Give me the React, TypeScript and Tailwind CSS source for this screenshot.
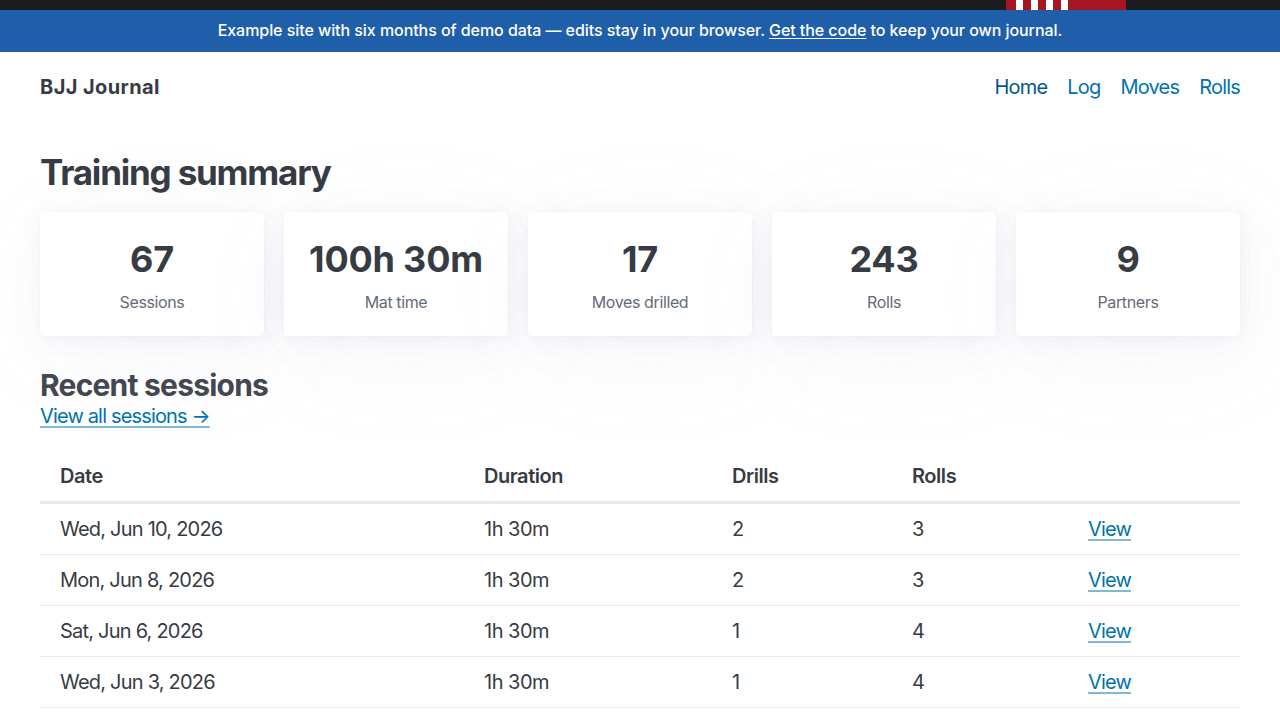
const links = ["Home", "Log", "Moves", "Rolls"];

const stats = [
  { value: "67", label: "Sessions" },
  { value: "100h 30m", label: "Mat time" },
  { value: "17", label: "Moves drilled" },
  { value: "243", label: "Rolls" },
  { value: "9", label: "Partners" },
];

const sessions = [
  { date: "Wed, Jun 10, 2026", duration: "1h 30m", drills: 2, rolls: 3 },
  { date: "Mon, Jun 8, 2026", duration: "1h 30m", drills: 2, rolls: 3 },
  { date: "Sat, Jun 6, 2026", duration: "1h 30m", drills: 1, rolls: 4 },
  { date: "Wed, Jun 3, 2026", duration: "1h 30m", drills: 1, rolls: 4 },
];

const linkClass =
  "tracking-[-0.84px] text-[#0172ad] underline decoration-[#0172ad]/50 decoration-2 underline-offset-[3px]";

const headClass = "border-b-[3px] border-[#e7eaf0] pl-5 font-semibold";
const cellClass = "border-b border-[#e7eaf0] pl-5";

const BeltBar = () => (
  <div className="flex h-[10px] justify-end bg-[#1c1b20] pr-[154px]">
    <div className="flex w-[120px] gap-2 bg-[#a51522] pl-[10px]">
      <div className="w-[7px] bg-white" />
      <div className="w-[7px] bg-white" />
      <div className="w-[7px] bg-white" />
      <div className="w-[7px] bg-white" />
    </div>
  </div>
);

const App = () => {
  return (
    <div className="h-screen overflow-hidden bg-white font-['Inter',sans-serif] text-xl text-[#373c44]">
      <BeltBar />
      <div className="h-[42px] bg-[#1f5faa] text-center text-base leading-[40px] font-medium tracking-[-0.06px] text-white">
        Example site with six months of demo data — edits stay in your browser.{" "}
        <a className="underline decoration-1 underline-offset-2">Get the code</a> to keep your own journal.
      </div>

      <div className="px-10">
        <header className="flex h-[70px] items-center justify-between">
          <strong className="font-bold tracking-[0.4px]">BJJ Journal</strong>
          <nav className="flex gap-5 tracking-[-0.8px]">
            {links.map((link) => (
              <a key={link} className={link === "Home" ? "text-[#015887]" : "text-[#0172ad]"}>
                {link}
              </a>
            ))}
          </nav>
        </header>

        <h1 className="mt-7 text-[35px] leading-[44px] font-bold tracking-[-1.2px]">Training summary</h1>
        <div className="mt-[18px] grid grid-cols-5 gap-5">
          {stats.map((stat) => (
            <div
              key={stat.label}
              className="h-[124px] rounded-[5px] bg-white pt-[25px] text-center shadow-[0.29px_0.58px_3.48px_rgba(129,145,181,0.017),0.67px_1.34px_8.04px_rgba(129,145,181,0.024),1.25px_2.5px_15px_rgba(129,145,181,0.03),2.25px_4.5px_27px_rgba(129,145,181,0.036),4.17px_8.34px_50px_rgba(129,145,181,0.043),10px_20px_120px_rgba(129,145,181,0.06),0_0_0_0.25px_rgba(129,145,181,0.015)]"
            >
              <div className="text-[36px] leading-[44px] font-bold tracking-[-0.2px]">{stat.value}</div>
              <div className="mt-[9px] text-base tracking-[-0.38px] text-[#646b79]">{stat.label}</div>
            </div>
          ))}
        </div>

        <h2 className="mt-[31px] -mb-px text-[30px] leading-9 font-bold tracking-[-0.78px] text-[#424751]">
          Recent sessions
        </h2>
        <a className={linkClass}>View all sessions →</a>

        <table className="mt-[21px] w-full table-fixed border-separate border-spacing-0 text-left">
          <thead>
            <tr className="h-[53px] tracking-[-0.45px]">
              <th className={`w-[424px] ${headClass}`}>Date</th>
              <th className={`w-[248px] ${headClass}`}>Duration</th>
              <th className={`w-[180px] ${headClass}`}>Drills</th>
              <th className={`w-[176px] ${headClass}`}>Rolls</th>
              <th className={headClass} />
            </tr>
          </thead>
          <tbody>
            {sessions.map((session) => (
              <tr key={session.date} className="h-[51px]">
                <td className={`${cellClass} tracking-[-0.78px]`}>{session.date}</td>
                <td className={`${cellClass} tracking-[-0.5px]`}>{session.duration}</td>
                <td className={cellClass}>{session.drills}</td>
                <td className={cellClass}>{session.rolls}</td>
                <td className={cellClass}>
                  <a className={linkClass}>View</a>
                </td>
              </tr>
            ))}
          </tbody>
        </table>
      </div>
    </div>
  );
};

export default App;
